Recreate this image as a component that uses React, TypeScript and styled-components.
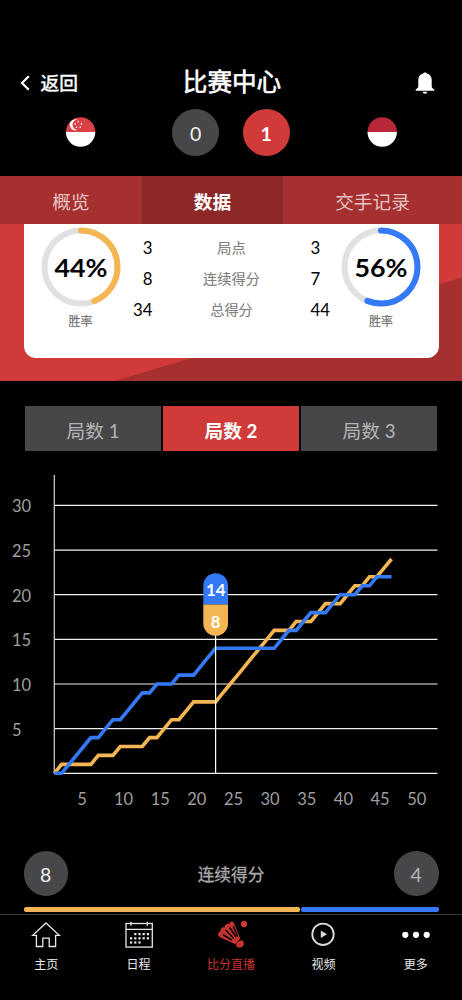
import React from 'react';
import styled, { createGlobalStyle } from 'styled-components';

const GlobalStyle = createGlobalStyle`
  * { box-sizing: border-box; }
  body {
    margin: 0;
    background: #000;
    color: #fff;
    font-family: Lato, "Noto Sans CJK SC", sans-serif;
  }
  button { font: inherit; color: inherit; border: 0; padding: 0; background: none; }
`;

const RED = '#d03b3a';
const GREY = '#474749';
const GOLD = '#f4b653';
const BLUE = '#347af6';

const Screen = styled.div`
  width: 462px;
  height: 1000px;
  overflow: hidden;
  display: flex;
  flex-direction: column;
  background: #000;
`;

const Header = styled.header`
  height: 58px;
  margin-top: 50px;
  padding: 8px 20px 0;
  display: grid;
  grid-template-columns: 1fr auto 1fr;
  align-items: center;
`;

const BackButton = styled.button`
  display: flex;
  align-items: center;
  gap: 9.5px;
  font-size: 18.7px;
  line-height: 24px;
  -webkit-text-stroke: 0.5px #fff;
`;

const Title = styled.h1`
  margin: 0 0 3px 2px;
  font-size: 24.6px;
  line-height: 34px;
  font-weight: 400;
  -webkit-text-stroke: 0.6px #fff;
`;

const BellButton = styled.button`
  display: flex;
  justify-self: end;
  margin-right: 7px;
`;

const ScoreRow = styled.section`
  height: 68px;
  display: flex;
  align-items: flex-start;
  padding: 0.5px 65px 0;
`;

const FlagSlot = styled.div`
  width: 31px;
  height: 47px;
  display: flex;
  align-items: center;
`;

const Scores = styled.div`
  flex: 1;
  display: flex;
  justify-content: center;
  gap: 23.5px;
`;

const Disc = styled.div<{ $size: number; $bg?: string; $color?: string; $bold?: boolean }>`
  width: ${p => p.$size}px;
  height: ${p => p.$size}px;
  border-radius: 50%;
  display: flex;
  align-items: center;
  justify-content: center;
  background: ${p => p.$bg ?? GREY};
  color: ${p => p.$color ?? '#f0f0f0'};
  font-size: 19.5px;
  font-weight: ${p => (p.$bold ? 700 : 400)};
  padding-top: 2px;
`;

const Tabs = styled.nav`
  height: 47.5px;
  display: grid;
  grid-template-columns: 142px 141px 179px;
`;

const Tab = styled.button<{ $active?: boolean }>`
  background: ${p => (p.$active ? '#8d2828' : '#a62f2f')};
  color: ${p => (p.$active ? '#fff' : '#e6c3c3')};
  font-size: 18.7px;
  font-weight: ${p => (p.$active ? 700 : 400)};
  padding-top: 2px;
`;

const StatsPanel = styled.section`
  height: 157.5px;
  padding: 0 23.5px;
  background: ${RED};
  display: grid;
  > * { grid-area: 1 / 1; }
`;

const PanelShade = styled.div`
  margin: 0 -23.5px;
  background: #a62f2f;
  clip-path: polygon(113px 158px, 462px 54px, 462px 158px);
`;

const StatsCard = styled.div`
  isolation: isolate;
  height: 134.5px;
  border-radius: 0 0 12px 12px;
  background: #fff;
  color: #000;
  display: grid;
  grid-template-columns: 114px 1fr 115px;
`;

const GaugeColumn = styled.div`
  display: flex;
  flex-direction: column;
  align-items: center;
  padding-top: 3px;
`;

const GaugeLabel = styled.span`
  margin-top: 6.5px;
  font-size: 12px;
  line-height: 18px;
  color: #6d6d6d;
  -webkit-text-stroke: 0.15px #6d6d6d;
`;

const StatList = styled.div`
  display: flex;
  flex-direction: column;
  padding-top: 7.5px;
`;

const StatLine = styled.div`
  height: 31px;
  display: grid;
  grid-template-columns: 15px 1fr 13px;
  align-items: center;
  font-size: 16.8px;
  line-height: 31px;
`;

const StatLeft = styled.span`
  display: flex;
  justify-content: flex-end;
  padding-top: 1px;
`;

const StatRight = styled.span`
  padding-top: 1px;
`;

const StatName = styled.span`
  text-align: center;
  font-size: 14.2px;
  color: #808080;
  -webkit-text-stroke: 0.15px #808080;
`;

const SetTabs = styled.nav`
  margin: 24.5px 25px 0;
  height: 45px;
  display: grid;
  grid-template-columns: repeat(3, 1fr);
  gap: 2px;
`;

const SetTab = styled.button<{ $active?: boolean }>`
  background: ${p => (p.$active ? RED : GREY)};
  color: ${p => (p.$active ? '#fff' : '#b4b4b4')};
  font-size: 18.7px;
  font-weight: ${p => (p.$active ? 700 : 400)};
  padding-top: 3px;
`;

const ChartArea = styled.section`
  height: 350px;
  margin-top: 19.5px;
`;

const StreakRow = styled.section`
  margin: 31px 23.5px 0;
  height: 45px;
  display: flex;
  align-items: center;
  justify-content: space-between;
`;

const StreakTitle = styled.span`
  font-size: 16.7px;
  color: #a9a9a9;
  -webkit-text-stroke: 0.3px #a9a9a9;
`;

const StreakBar = styled.div`
  margin: 11px 23.5px 0;
  height: 5px;
  display: flex;
  gap: 1px;
`;

const BarPart = styled.div<{ $share: number; $color: string }>`
  flex: ${p => p.$share} 0 0;
  border-radius: 2px;
  background: ${p => p.$color};
`;

const BottomNav = styled.nav`
  margin-top: 1.5px;
  flex: 1;
  border-top: 1px solid #383838;
  display: grid;
  grid-template-columns: repeat(5, 1fr);
`;

const NavItem = styled.button<{ $active?: boolean }>`
  display: flex;
  flex-direction: column;
  align-items: center;
  align-self: start;
  padding-top: 4.5px;
  color: ${p => (p.$active ? '#c7332f' : '#ececec')};
  font-size: 12px;
  line-height: 18px;
  svg { height: 34px; width: 40px; margin-bottom: 3px; }
`;

const BackIcon = () => (
  <svg width="11" height="18" viewBox="0 0 11 18" fill="none">
    <path d="M8.800 2.200 2 9l6.800 6.800" stroke="#fff" strokeWidth="2.200" />
  </svg>
);

const BellIcon = () => (
  <svg width="20" height="23" viewBox="0 0 20 23" fill="#fff">
    <path d="M10 .6c1 0 1.500.3 1.800.8 3.200.6 4.900 3.200 4.900 6.400v6.200c0 1.700 1 2.600 2.600 3.600v1.100H.7v-1.100c1.600-1 2.600-1.900 2.600-3.600V7.800c0-3.200 1.700-5.800 4.900-6.400C8.500.9 9 .6 10 .6Z" />
    <path d="M7.600 19.700h4.800c-.3 1.300-1.200 2-2.400 2s-2.100-.7-2.400-2Z" />
  </svg>
);

const SingaporeFlag = () => (
  <svg width="31" height="30" viewBox="0 0 31 30">
    <clipPath id="sg"><circle cx="15.600" cy="15" r="14.700" /></clipPath>
    <g clipPath="url(#sg)">
      <rect width="31" height="15" fill="#d94145" />
      <rect y="15" width="31" height="15" fill="#fff" />
      <circle cx="10.300" cy="7.800" r="5.600" fill="#fff" />
      <circle cx="12.800" cy="7.800" r="5.300" fill="#d94145" />
      <g fill="#fff">
        <circle cx="13.300" cy="4.600" r=".8" />
        <circle cx="10.300" cy="6.900" r=".8" />
        <circle cx="16.400" cy="6.900" r=".8" />
        <circle cx="11.500" cy="10.300" r=".8" />
        <circle cx="15.200" cy="10.300" r=".8" />
      </g>
    </g>
  </svg>
);

const IndonesiaFlag = () => (
  <svg width="31" height="30" viewBox="0 0 31 30">
    <clipPath id="id"><circle cx="16.200" cy="15" r="14.700" /></clipPath>
    <g clipPath="url(#id)">
      <rect width="31" height="15" fill="#b82639" />
      <rect y="15" width="31" height="15" fill="#fff" />
    </g>
  </svg>
);

const Gauge = ({ value, color }: { value: number; color: string }) => {
  const r = 36.5;
  const length = 2 * Math.PI * r;
  return (
    <svg width="80" height="80" viewBox="0 0 80 80">
      <circle cx="40" cy="40" r={r} fill="none" stroke="#e1e1e1" strokeWidth="6" />
      <circle
        cx="40" cy="40" r={r} fill="none" stroke={color} strokeWidth="6" strokeLinecap="round"
        strokeDasharray={`${(length * value) / 100} ${length}`} transform="rotate(-90 40 40)"
      />
      <text x="40" y="50" textAnchor="middle" fontSize="24.500" fontWeight="700" textLength="53" lengthAdjust="spacingAndGlyphs">{value}%</text>
    </svg>
  );
};

// Winner of every rally in the set: G for the gold side, B for the blue side.
const RALLIES = 'GBBBBGBBGBBBGBGGBGGBBBGGGGGGGGBBGBBGGBBGGBGBGG';
const ORIGIN_X = 54.3;
const ORIGIN_Y = 303.3;
const STEP_X = 7.33;
const STEP_Y = 8.93;

const trace = (side: string) => {
  let score = 0;
  const points = [`${ORIGIN_X},${ORIGIN_Y}`];
  [...RALLIES].forEach((winner, i) => {
    if (winner === side) score += 1;
    points.push(`${(ORIGIN_X + (i + 1) * STEP_X).toFixed(1)},${(ORIGIN_Y - score * STEP_Y).toFixed(1)}`);
  });
  return points.join(' ');
};

const X_LABELS = [[5, 82], [10, 123.5], [15, 160.2], [20, 196.8], [25, 233.5], [30, 270.1], [35, 306.8], [40, 343.4], [45, 380.1], [50, 416.7]];

const ScoreChart = () => (
  <svg width="462" height="350" viewBox="0 0 462 350">
    {[0, 5, 10, 15, 20, 25, 30].map(v => (
      <line key={v} x1={ORIGIN_X} x2="437.500" y1={ORIGIN_Y - v * STEP_Y} y2={ORIGIN_Y - v * STEP_Y} stroke="#eee" strokeWidth="1.200" />
    ))}
    <line x1={ORIGIN_X} x2={ORIGIN_X} y1="5" y2={ORIGIN_Y} stroke="#d8d8d8" strokeWidth="1.200" />
    <g fill="#9f9f9f" fontSize="16.500">
      {[5, 10, 15, 20, 25, 30].map(v => (
        <text key={v} x="12" y={ORIGIN_Y - v * STEP_Y + 7}>{v}</text>
      ))}
      {X_LABELS.map(([v, x]) => (
        <text key={v} x={x} y="334.500" textAnchor="middle">{v}</text>
      ))}
    </g>
    <polyline points={trace('G')} fill="none" stroke={GOLD} strokeWidth="3.600" />
    <polyline points={trace('B')} fill="none" stroke={BLUE} strokeWidth="3.600" />
    <line x1="215.600" x2="215.600" y1="160" y2={ORIGIN_Y} stroke="#fff" strokeWidth="1.200" />
    <path d="M203.300 134.500v-19a12.350 12.350 0 0 1 24.700 0v19Z" fill={BLUE} />
    <path d="M203.300 134.500v19a12.350 12.350 0 0 0 24.700 0v-19Z" fill={GOLD} />
    <g fill="#fff" fontSize="16.800" fontWeight="700" textAnchor="middle">
      <text x="215.700" y="126">14</text>
      <text x="215.700" y="157.500">8</text>
    </g>
  </svg>
);

const HomeIcon = () => (
  <svg viewBox="0 0 40 34" fill="none" stroke="#e8e8e8" strokeWidth="1.300">
    <path d="m20 4 13.300 12.300h-3.700v11.200h-6.400v-8.300h-6.400v8.300h-6.400V16.300H6.700Z" />
  </svg>
);

const DOTS = [[1, 0], [2, 0], [3, 0], [4, 0], [0, 1], [1, 1], [2, 1], [3, 1], [4, 1], [0, 2], [1, 2], [2, 2]];

const CalendarIcon = () => (
  <svg viewBox="0 0 40 34" fill="none" stroke="#e8e8e8" strokeWidth="1.300">
    <rect x="7" y="4.500" width="26.300" height="23.600" />
    <path d="M7 10.300h26.300M12 2.800v4M28.300 2.800v4" />
    <g fill="#e8e8e8" stroke="none">
      {DOTS.map(([c, r]) => (
        <rect key={`${c}${r}`} x={11 + c * 4.2} y={14 + r * 4.2} width="2.200" height="2.200" />
      ))}
    </g>
  </svg>
);

const ShuttleIcon = () => (
  <svg viewBox="0 0 40 34" fill="none">
    <path
      d="M24.500 25.300 8.600 18C6.300 16.600 6.700 13 9.600 12.600 8.900 9.500 11.500 7.600 13.600 8.500 13.500 5.300 16 4 18.100 5.100 18.800 2 22.300 1.800 23 4.300L29.300 19.600Z"
      fill="#c7332f"
    />
    <g stroke="#000" strokeLinecap="round" strokeWidth="1.500">
      <path d="m12.500 16 8 4.800M15 11.500l7.300 7.600M19 9l5.700 8.600M22.500 8l4 9" />
    </g>
    <path d="M25 26c1-2.900 3.200-4.700 6.200-4.800 2.300 1.800 2.100 4.900 0 6.500-2.400 1.700-5.700 1-6.200-1.700Z" fill="#c7332f" />
    <circle cx="33" cy="5.100" r="3.100" fill="#d63b36" />
  </svg>
);

const VideoIcon = () => (
  <svg viewBox="0 0 40 34" fill="none">
    <circle cx="20" cy="15.300" r="10.700" stroke="#dcdcdc" strokeWidth="1.800" />
    <path d="m17.800 11.500 6.200 3.800-6.200 3.800Z" fill="#dcdcdc" />
  </svg>
);

const MoreIcon = () => (
  <svg viewBox="0 0 40 34" fill="#fff">
    <circle cx="9.300" cy="15.800" r="3.100" />
    <circle cx="20" cy="15.800" r="3.100" />
    <circle cx="30.700" cy="15.800" r="3.100" />
  </svg>
);

const STATS = [
  ['3', '局点', '3'],
  ['8', '连续得分', '7'],
  ['34', '总得分', '44'],
];

export default function App() {
  return (
    <Screen>
      <GlobalStyle />
      <Header>
        <BackButton><BackIcon />返回</BackButton>
        <Title>比赛中心</Title>
        <BellButton><BellIcon /></BellButton>
      </Header>
      <ScoreRow>
        <FlagSlot><SingaporeFlag /></FlagSlot>
        <Scores>
          <Disc $size={47}>0</Disc>
          <Disc $size={47} $bg={RED} $color="#fff" $bold>1</Disc>
        </Scores>
        <FlagSlot><IndonesiaFlag /></FlagSlot>
      </ScoreRow>
      <Tabs>
        <Tab>概览</Tab>
        <Tab $active>数据</Tab>
        <Tab>交手记录</Tab>
      </Tabs>
      <StatsPanel>
        <PanelShade />
        <StatsCard>
          <GaugeColumn>
            <Gauge value={44} color={GOLD} />
            <GaugeLabel>胜率</GaugeLabel>
          </GaugeColumn>
          <StatList>
            {STATS.map(([left, name, right]) => (
              <StatLine key={name}>
                <StatLeft>{left}</StatLeft>
                <StatName>{name}</StatName>
                <StatRight>{right}</StatRight>
              </StatLine>
            ))}
          </StatList>
          <GaugeColumn>
            <Gauge value={56} color={BLUE} />
            <GaugeLabel>胜率</GaugeLabel>
          </GaugeColumn>
        </StatsCard>
      </StatsPanel>
      <SetTabs>
        <SetTab>局数 1</SetTab>
        <SetTab $active>局数 2</SetTab>
        <SetTab>局数 3</SetTab>
      </SetTabs>
      <ChartArea><ScoreChart /></ChartArea>
      <StreakRow>
        <Disc $size={44.5}>8</Disc>
        <StreakTitle>连续得分</StreakTitle>
        <Disc $size={44.5} $color="#b4b4b4">4</Disc>
      </StreakRow>
      <StreakBar>
        <BarPart $share={8} $color={GOLD} />
        <BarPart $share={4} $color={BLUE} />
      </StreakBar>
      <BottomNav>
        <NavItem><HomeIcon />主页</NavItem>
        <NavItem><CalendarIcon />日程</NavItem>
        <NavItem $active><ShuttleIcon />比分直播</NavItem>
        <NavItem><VideoIcon />视频</NavItem>
        <NavItem><MoreIcon />更多</NavItem>
      </BottomNav>
    </Screen>
  );
}
